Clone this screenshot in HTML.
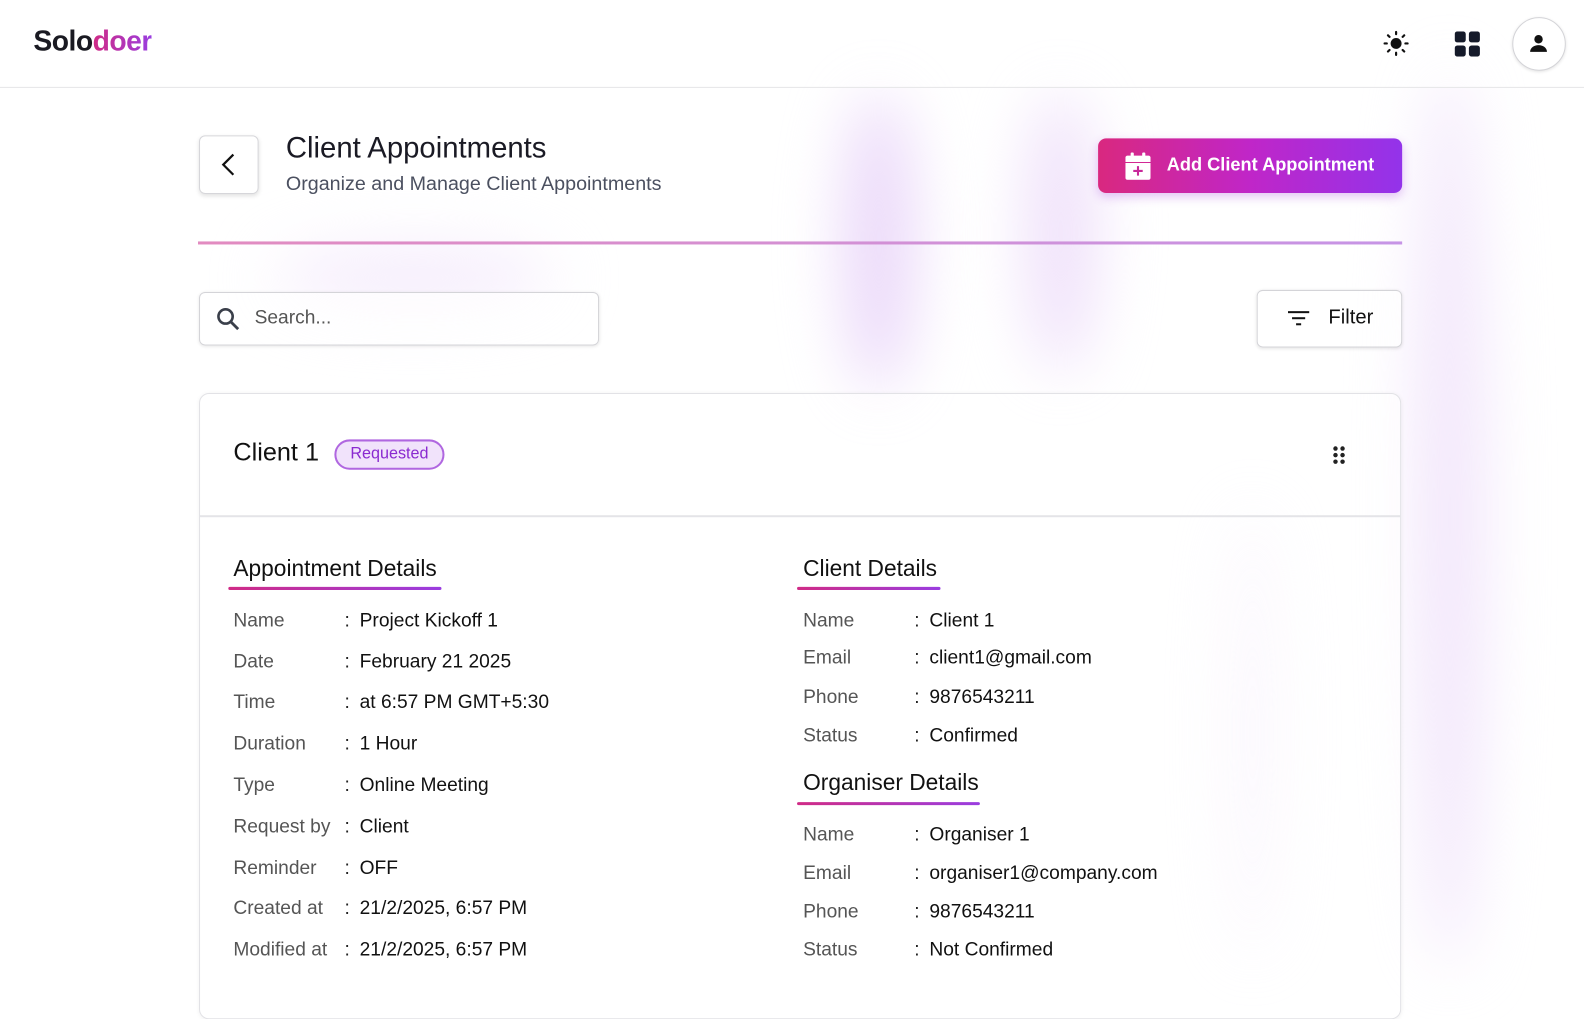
<!DOCTYPE html>
<html><head><meta charset="utf-8"><style>
*{box-sizing:border-box;margin:0;padding:0}
body{width:1584px;height:999px;overflow:hidden;background:#fff;font-family:"Liberation Sans",sans-serif;color:#111;position:relative}
#w{position:absolute;left:0;top:0;width:1584px;height:999px;transform:scale(1.0102);transform-origin:0 0}
.streak{position:absolute;filter:blur(30px);border-radius:50%}
.hdr{position:absolute;left:0;top:0;width:1584px;height:87px;border-bottom:1px solid #e5e5e8;background:rgba(255,255,255,.6)}
.abs{position:absolute}
.row{position:absolute;font-size:19px;white-space:nowrap}
.row .l{position:absolute;left:0;color:#555}
.row .c{position:absolute;color:#222}
.row .v{position:absolute;color:#111}
.sh{position:absolute;font-size:22.5px;color:#111}
.ul{position:absolute;height:3px;background:linear-gradient(90deg,#d02b86,#9a3de0);border-radius:2px}
</style></head><body><div id="w">
<div class="streak" style="left:835px;top:90px;width:70px;height:300px;background:#ead7f9"></div>
<div class="streak" style="left:1015px;top:90px;width:70px;height:280px;background:#efe0fa"></div>
<div class="streak" style="left:1400px;top:60px;width:70px;height:900px;background:#f2e6fb"></div>
<div class="streak" style="left:1215px;top:500px;width:50px;height:450px;background:#f6eefc"></div>
<div class="streak" style="left:270px;top:245px;width:280px;height:60px;background:#f5ecfc"></div>
<div class="hdr"></div>
<div class="abs" style="left:33px;top:25px;font-size:28px;font-weight:bold;letter-spacing:-0.5px"><span style="color:#1a1a22">Solo</span><span style="background:linear-gradient(90deg,#d02b86,#9a3de0);-webkit-background-clip:text;color:transparent">doer</span></div>
<svg class="abs" style="left:1369px;top:30px" width="26" height="26" viewBox="0 0 24 24" fill="#111"><circle cx="12" cy="12" r="5"/><g stroke="#111" stroke-width="2" stroke-linecap="round"><path d="M12 1.5v2M12 20.5v2M1.5 12h2M20.5 12h2M4.6 4.6l1.4 1.4M18 18l1.4 1.4M4.6 19.4L6 18M18 6l1.4-1.4"/></g></svg>
<svg class="abs" style="left:1440px;top:31px" width="25" height="25" viewBox="0 0 24 24" fill="#151a2a"><rect x="0" y="0" width="10.5" height="10.5" rx="2.5"/><rect x="13.5" y="0" width="10.5" height="10.5" rx="2.5"/><rect x="0" y="13.5" width="10.5" height="10.5" rx="2.5"/><rect x="13.5" y="13.5" width="10.5" height="10.5" rx="2.5"/></svg>
<div class="abs" style="left:1497px;top:17px;width:53px;height:53px;border-radius:50%;border:1.5px solid #d4d4d8;background:#fff;box-shadow:0 1px 3px rgba(0,0,0,.12)"></div>
<svg class="abs" style="left:1513px;top:33px" width="20" height="20" viewBox="0 0 24 24" fill="#111"><circle cx="12" cy="7" r="5"/><path d="M2 22c0-5 5-8 10-8s10 3 10 8z"/></svg>

<div class="abs" style="left:197px;top:134px;width:59px;height:58px;border:1px solid #d6d6da;border-radius:6px;background:#fff;box-shadow:0 2px 4px rgba(0,0,0,.12)"></div>
<svg class="abs" style="left:216px;top:151px" width="22" height="24" viewBox="0 0 22 24"><path d="M15 2L5 12l10 10" fill="none" stroke="#111" stroke-width="2.2"/></svg>
<div class="abs" style="left:283px;top:131px;font-size:29px;color:#1a1a24">Client Appointments</div>
<div class="abs" style="left:283px;top:171px;font-size:19.5px;color:#4b5060">Organize and Manage Client Appointments</div>
<div class="abs" style="left:1087px;top:137px;width:301px;height:54px;border-radius:8px;background:linear-gradient(90deg,#d9287f,#c026c8 50%,#9333ea);box-shadow:0 4px 10px rgba(160,60,220,.3)"></div>
<svg class="abs" style="left:1114px;top:151px" width="25" height="27" viewBox="0 0 24 26" fill="#fff"><rect x="5" y="0" width="3" height="5" rx="1"/><rect x="16" y="0" width="3" height="5" rx="1"/><path d="M2 3h20a2 2 0 0 1 2 2v19a2 2 0 0 1-2 2H2a2 2 0 0 1-2-2V5a2 2 0 0 1 2-2zM0 9v1h24V9z"/><path d="M11 13h2v3.5h3.5v2H13V22h-2v-3.5H7.5v-2H11z" fill="#c8289a"/></svg>
<div class="abs" style="left:1155px;top:153px;font-size:18px;font-weight:bold;color:#fff">Add Client Appointment</div>
<div class="abs" style="left:196px;top:239px;width:1192px;height:3px;background:linear-gradient(90deg,#e28bc0,#c694e6)"></div>

<div class="abs" style="left:197px;top:289px;width:396px;height:53px;border:1.5px solid #d4d4d8;border-radius:6px;background:rgba(255,255,255,.7);box-shadow:0 1px 3px rgba(0,0,0,.1)"></div>
<svg class="abs" style="left:213px;top:303px" width="26" height="26" viewBox="0 0 24 24"><circle cx="9.5" cy="9.5" r="6.5" fill="none" stroke="#3a3f4a" stroke-width="2.4"/><path d="M14.5 14.5l6.5 6.5" stroke="#3a3f4a" stroke-width="2.6"/></svg>
<div class="abs" style="left:252px;top:304px;font-size:19px;color:#555">Search...</div>
<div class="abs" style="left:1244px;top:287px;width:144px;height:57px;border:1.5px solid #d4d4d8;border-radius:6px;background:rgba(255,255,255,.7);box-shadow:0 1px 3px rgba(0,0,0,.1)"></div>
<svg class="abs" style="left:1275px;top:306px" width="22" height="18" viewBox="0 0 22 18" fill="#111"><rect x="0" y="2" width="21" height="2"/><rect x="4" y="8" width="13" height="2"/><rect x="8" y="14" width="5" height="2"/></svg>
<div class="abs" style="left:1315px;top:303px;font-size:20px;color:#111">Filter</div>

<div class="abs" style="left:197px;top:389px;width:1190px;height:620px;border:1.5px solid #e2e2e6;border-radius:10px;background:rgba(255,255,255,.55);box-shadow:0 1px 4px rgba(0,0,0,.06)"></div>
<div class="abs" style="left:198px;top:510px;width:1188px;height:2px;background:#e4e4e8"></div>
<div class="abs" style="left:231px;top:434px;font-size:25px;color:#111">Client 1</div>
<div class="abs" style="left:331px;top:435px;width:109px;height:30px;border:2px solid #b067e0;border-radius:15px;background:#f1e3fb;color:#8a2ad0;font-size:16px;text-align:center;line-height:26px">Requested</div>
<svg class="abs" style="left:1319px;top:441px" width="14" height="19" viewBox="0 0 14 19" fill="#222"><circle cx="3" cy="3" r="2.2"/><circle cx="10" cy="3" r="2.2"/><circle cx="3" cy="9.5" r="2.2"/><circle cx="10" cy="9.5" r="2.2"/><circle cx="3" cy="16" r="2.2"/><circle cx="10" cy="16" r="2.2"/></svg>

<div class="sh" style="left:231px;top:550px">Appointment Details</div>
<div class="ul" style="left:226px;top:581px;width:211px"></div>
<div class="sh" style="left:795px;top:550px">Client Details</div>
<div class="ul" style="left:789px;top:581px;width:142px"></div>
<div class="sh" style="left:795px;top:762px">Organiser Details</div>
<div class="ul" style="left:789px;top:794px;width:181px"></div>

<div class="row" style="left:231px;top:604px"><span class="l">Name</span><span class="c" style="left:110px">:</span><span class="v" style="left:125px">Project Kickoff 1</span></div>
<div class="row" style="left:231px;top:645px"><span class="l">Date</span><span class="c" style="left:110px">:</span><span class="v" style="left:125px">February 21 2025</span></div>
<div class="row" style="left:231px;top:685px"><span class="l">Time</span><span class="c" style="left:110px">:</span><span class="v" style="left:125px">at 6:57 PM GMT+5:30</span></div>
<div class="row" style="left:231px;top:726px"><span class="l">Duration</span><span class="c" style="left:110px">:</span><span class="v" style="left:125px">1 Hour</span></div>
<div class="row" style="left:231px;top:767px"><span class="l">Type</span><span class="c" style="left:110px">:</span><span class="v" style="left:125px">Online Meeting</span></div>
<div class="row" style="left:231px;top:808px"><span class="l">Request by</span><span class="c" style="left:110px">:</span><span class="v" style="left:125px">Client</span></div>
<div class="row" style="left:231px;top:849px"><span class="l">Reminder</span><span class="c" style="left:110px">:</span><span class="v" style="left:125px">OFF</span></div>
<div class="row" style="left:231px;top:889px"><span class="l">Created at</span><span class="c" style="left:110px">:</span><span class="v" style="left:125px">21/2/2025, 6:57 PM</span></div>
<div class="row" style="left:231px;top:930px"><span class="l">Modified at</span><span class="c" style="left:110px">:</span><span class="v" style="left:125px">21/2/2025, 6:57 PM</span></div>

<div class="row" style="left:795px;top:604px"><span class="l">Name</span><span class="c" style="left:110px">:</span><span class="v" style="left:125px">Client 1</span></div>
<div class="row" style="left:795px;top:641px"><span class="l">Email</span><span class="c" style="left:110px">:</span><span class="v" style="left:125px">client1@gmail.com</span></div>
<div class="row" style="left:795px;top:680px"><span class="l">Phone</span><span class="c" style="left:110px">:</span><span class="v" style="left:125px">9876543211</span></div>
<div class="row" style="left:795px;top:718px"><span class="l">Status</span><span class="c" style="left:110px">:</span><span class="v" style="left:125px">Confirmed</span></div>
<div class="row" style="left:795px;top:816px"><span class="l">Name</span><span class="c" style="left:110px">:</span><span class="v" style="left:125px">Organiser 1</span></div>
<div class="row" style="left:795px;top:854px"><span class="l">Email</span><span class="c" style="left:110px">:</span><span class="v" style="left:125px">organiser1@company.com</span></div>
<div class="row" style="left:795px;top:892px"><span class="l">Phone</span><span class="c" style="left:110px">:</span><span class="v" style="left:125px">9876543211</span></div>
<div class="row" style="left:795px;top:930px"><span class="l">Status</span><span class="c" style="left:110px">:</span><span class="v" style="left:125px">Not Confirmed</span></div>
</div></body></html>
